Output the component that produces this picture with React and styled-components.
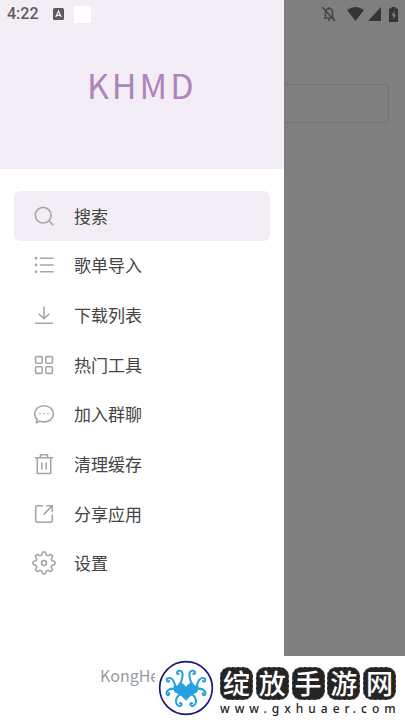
import React from 'react';
import styled, { createGlobalStyle } from 'styled-components';

const GlobalStyle = createGlobalStyle`
  *, *::before, *::after { box-sizing: border-box; }
  body {
    margin: 0;
    background: #fff;
    font-family: "Noto Sans CJK SC", "Noto Sans", sans-serif;
    color: #444;
  }
`;

const Screen = styled.div`
  position: relative;
  min-height: 100vh;
  display: flex;
  overflow: hidden;
`;

const Home = styled.main`
  flex: 1;
  padding: 84px 16px 0;
`;

const SearchBox = styled.input`
  width: 100%;
  height: 39px;
  border: 1px solid #e4e4e4;
  border-radius: 4px;
  background: #fff;
`;

const Scrim = styled.div`
  position: absolute;
  inset: 0;
  background: rgba(0, 0, 0, 0.5);
`;

const Drawer = styled.aside`
  position: absolute;
  inset: 0 auto 0 0;
  width: 70%;
  display: flex;
  flex-direction: column;
  background: #fff;
`;

const DrawerHeader = styled.header`
  height: 169px;
  display: flex;
  align-items: center;
  justify-content: center;
  background: #f3eef6;
`;

const Brand = styled.h1`
  margin: 0;
  color: #ad84bd;
  font-size: 34px;
  font-weight: 400;
  line-height: 48px;
  letter-spacing: 3px;
`;

const Menu = styled.nav`
  flex: 1;
  display: grid;
  grid-auto-rows: 1fr;
  padding: 22px 14px 0;
`;

const MenuItem = styled.button`
  display: flex;
  align-items: center;
  gap: 18px;
  min-height: 44px;
  padding: 0 18px;
  border: 0;
  border-radius: 6px;
  background: ${({ $active }) => ($active ? '#f3eef6' : 'transparent')};
  color: #444;
  font: inherit;
  font-size: 17px;
  line-height: 24px;
  text-align: left;
`;

const MenuIcon = styled.svg`
  width: 24px;
  height: 24px;
  flex: none;
  fill: none;
  stroke: #a8a5aa;
  stroke-width: 1.6;
  stroke-linecap: round;
  stroke-linejoin: round;
`;

const DrawerFooter = styled.footer`
  padding: 75px 16px 33px 100px;
  color: #979a9f;
  font-size: 16px;
  line-height: 24px;
`;

const StatusBar = styled.div`
  position: absolute;
  inset: 0 0 auto 0;
  display: flex;
  align-items: center;
  justify-content: space-between;
  height: 28px;
  padding: 0 6px 0 7px;
`;

const StatusGroup = styled.div`
  display: flex;
  align-items: center;
  gap: ${({ $gap }) => $gap}px;
`;

const Clock = styled.time`
  margin-right: 4px;
  color: #5d5a60;
  font: 500 16px/20px Roboto, sans-serif;
`;

const Blank = styled.span`
  width: 17px;
  height: 17px;
  background: #fff;
`;

const StatusIcon = styled.svg`
  display: block;
  flex: none;
  fill: #353535;
`;

const Watermark = styled.div`
  position: absolute;
  right: 0;
  bottom: 0;
  display: flex;
  align-items: center;
  gap: 6px;
  height: 64px;
  padding: 0 9px 0 3px;
  background: #fff;
`;

const Seal = styled.svg`
  width: 56px;
  height: 56px;
  flex: none;
`;

const SiteInfo = styled.div`
  display: flex;
  flex-direction: column;
  gap: 1px;
  width: 176px;
  padding-top: 7px;
`;

const Tiles = styled.div`
  display: flex;
  justify-content: space-between;
`;

const Tile = styled.span`
  display: grid;
  place-items: center;
  width: 33px;
  height: 33px;
  border: 1px dashed #6e6e6e;
  border-radius: 9px;
  background: #242424;
  color: #fff;
  font-size: 27px;
  font-weight: 500;
  line-height: 30px;
`;

const SiteLink = styled.a`
  color: #222;
  font: 500 12px/16px "Noto Sans", sans-serif;
  letter-spacing: 5px;
  white-space: nowrap;
  text-decoration: none;
`;

const gearPath = (() => {
  const points = [];
  for (let i = 0; i < 96; i += 1) {
    const angle = (i / 96) * Math.PI * 2;
    const wave = Math.cos(angle * 8);
    const radius = 9.6 + 1.4 * Math.tanh(wave * 2.4);
    points.push(`${(12 + radius * Math.sin(angle)).toFixed(2)} ${(12 - radius * Math.cos(angle)).toFixed(2)}`);
  }
  return `M${points.join('L')}Z`;
})();

const items = [
  {
    label: '搜索',
    icon: <><circle cx="11.2" cy="11.2" r="7.8" /><path d="M17 17l4 3.8" /></>,
  },
  {
    label: '歌单导入',
    icon: (
      <>
        <path d="M8.5 5.2H21M8.5 12H21M8.5 18.8H21" />
        <path strokeWidth="2.8" d="M4 5.2h.01M4 12h.01M4 18.8h.01" />
      </>
    ),
  },
  {
    label: '下载列表',
    icon: <path d="M12 4v11.5M7 11l5 4.7 5-4.7M3.6 20.2h16.8" />,
  },
  {
    label: '热门工具',
    icon: (
      <>
        <rect x="3.6" y="3.6" width="6.6" height="6.6" rx="1" />
        <rect x="13.8" y="3.6" width="6.6" height="6.6" rx="1" />
        <rect x="3.6" y="13.8" width="6.6" height="6.6" rx="1" />
        <rect x="13.8" y="13.8" width="6.6" height="6.6" rx="1" />
      </>
    ),
  },
  {
    label: '加入群聊',
    icon: (
      <>
        <path d="M5.4 17.5C3.5 16 2.6 14.1 2.6 11.9 2.6 7.2 6.8 3.7 12 3.7s9.5 3.5 9.5 8.1-4.3 8.1-9.5 8.1c-1.6 0-3-.2-4.1-.8l-3.6 1.7Z" />
        <path d="M8 11.6h.01M12 11.6h.01M16 11.6h.01" />
      </>
    ),
  },
  {
    label: '清理缓存',
    icon: <path d="M3.5 5.8h17M8.5 5.6V2.8h7v2.8M5.3 6v15.5h13.4V6M9.8 11v6M14.2 11v6" />,
  },
  {
    label: '分享应用',
    icon: <path d="M10.5 3.8H5.3Q3.7 3.8 3.7 5.4v13.2q0 1.6 1.6 1.6h13.4q1.6 0 1.6-1.6V13M14.6 3.8h5.7v5.7M20 4.1l-8 8" />,
  },
  {
    label: '设置',
    icon: <><path d={gearPath} /><circle cx="12" cy="12" r="2.5" /></>,
  },
];

const arms = [
  'M76 88C74 74 82 64 82 50C82 39 71 35 66 42C64 47 67 50 70 48',
  'M68 92C56 84 60 74 52 65C45 57 34 60 35 67C36 72 41 72 42 69',
  'M70 96C57 90 45 91 37 98C31 105 35 112 40 111C44 110 43 106 41 105',
  'M80 106C68 112 60 122 63 134C65 143 75 147 79 140C80 136 77 133 74 135',
];

function Octopus() {
  return (
    <Seal viewBox="9 7 166 166" role="img" aria-label="Octopus">
      <circle cx="92" cy="90" r="78" fill="#fff" stroke="#171782" strokeWidth="5" />
      <g fill="none" stroke="#27a0df" strokeWidth="6" strokeLinecap="round" strokeLinejoin="round">
        {arms.map((d) => <path key={d} d={d} />)}
        <g transform="matrix(-1 0 0 1 184 0)">
          {arms.map((d) => <path key={d} d={d} />)}
        </g>
      </g>
      <path fill="#27a0df" d="M55 80C62 88 67 84 73 72L79 76C85 77 89 82 92 87C95 82 99 77 105 76L111 72C117 84 122 88 129 80C128 94 129 101 121 105C112 108 102 116 92 128C82 116 72 108 63 105C55 101 56 94 55 80Z" />
    </Seal>
  );
}

export default function App() {
  return (
    <>
      <GlobalStyle />
      <Screen>
        <Home><SearchBox type="text" aria-label="搜索" /></Home>
        <Scrim />
        <Drawer>
          <DrawerHeader><Brand>KHMD</Brand></DrawerHeader>
          <Menu>
            {items.map(({ label, icon }, index) => (
              <MenuItem key={label} type="button" $active={index === 0}>
                <MenuIcon viewBox="0 0 24 24" aria-hidden="true">{icon}</MenuIcon>
                {label}
              </MenuItem>
            ))}
          </Menu>
          <DrawerFooter>KongHe</DrawerFooter>
        </Drawer>
        <StatusBar>
          <StatusGroup $gap={10}>
            <Clock>4:22</Clock>
            <StatusIcon width="11" height="12" viewBox="0 0 11 12" aria-hidden="true">
              <rect width="11" height="12" rx="1.5" fill="#5d5a60" />
              <path d="M2.8 9L5.5 3L8.2 9M3.8 7.3h3.4" fill="none" stroke="#f3eef6" strokeWidth="1.3" />
            </StatusIcon>
            <Blank />
          </StatusGroup>
          <StatusGroup $gap={4}>
            <StatusIcon width="24" height="18" viewBox="0 0 24 18" aria-hidden="true">
              <path d="M5 13h10M6.5 12V7.5Q6.5 4 10 3.5Q13.5 4 13.5 7.5V12M10 3V2M9 15h2M3 2l13 14" fill="none" stroke="#454545" strokeWidth="1.5" />
            </StatusIcon>
            <StatusIcon width="17" height="14" viewBox="0 0 17 14" aria-hidden="true">
              <path d="M0 3Q8.5-3 17 3L8.5 14Z" />
            </StatusIcon>
            <StatusIcon width="13" height="14" viewBox="0 0 13 14" aria-hidden="true">
              <path d="M13 0v14H0Z" />
            </StatusIcon>
            <StatusIcon width="14" height="15" viewBox="0 0 14 15" aria-hidden="true">
              <path d="M6.5 1.5V0h4v1.5H13V15H4V1.5Z" />
              <path d="M9.4 3.5L6.6 8.5h1.8v4L11 7.5H9.3Z" fill="#808080" />
            </StatusIcon>
          </StatusGroup>
        </StatusBar>
        <Watermark>
          <Octopus />
          <SiteInfo>
            <Tiles>
              {[...'绽放手游网'].map((char) => <Tile key={char}>{char}</Tile>)}
            </Tiles>
            <SiteLink href="#">www.gxhuaer.com</SiteLink>
          </SiteInfo>
        </Watermark>
      </Screen>
    </>
  );
}
